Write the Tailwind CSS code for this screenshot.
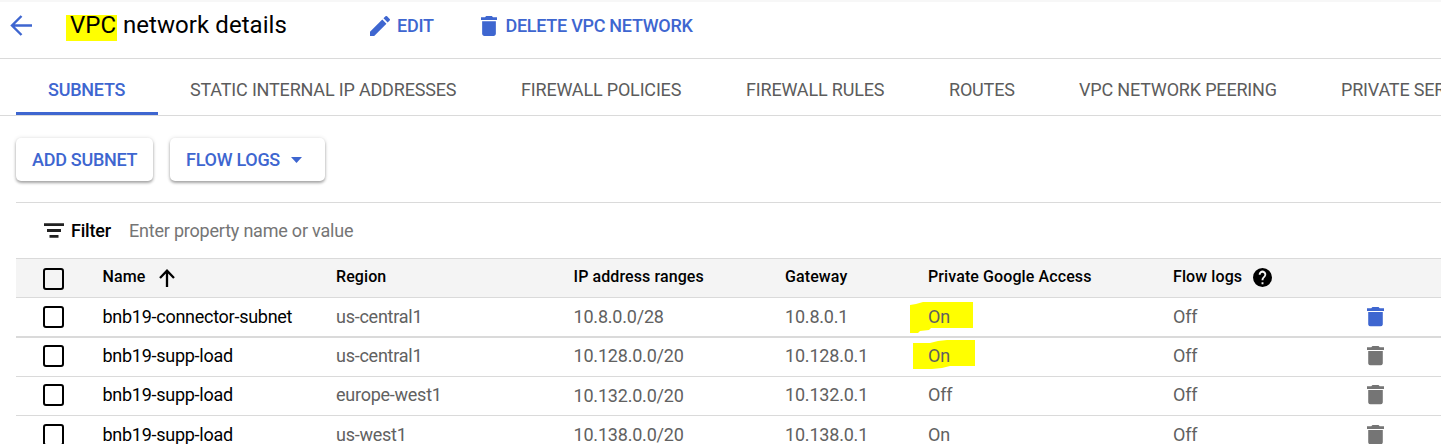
<!DOCTYPE html>
<html lang="en">
<head>
<meta charset="utf-8">
<title>VPC network details</title>
<script src="https://cdn.jsdelivr.net/npm/@tailwindcss/browser@4"></script>
</head>
<body class="bg-white font-['Roboto',sans-serif] text-black overflow-hidden w-[1441px] h-[444px]">
<svg class="hidden">
  <symbol id="trash" viewBox="5 3 14 18" preserveAspectRatio="none"><path d="M6 19c0 1.1.9 2 2 2h8c1.1 0 2-.9 2-2V7.700H6V19zM19 4.2h-3.5l-1-1.2h-5l-1 1.2H5v2.4h14V4.2z"/></symbol>
</svg>
<header class="h-[59px] border-b border-[#dadada] border-t-2 border-t-[#f7f7f7] flex items-center pb-[11px] whitespace-nowrap">
  <svg class="ml-[10px] w-[22px] h-[21px] mt-[2px] shrink-0" viewBox="0 0 22 21" fill="none" stroke="#3e66d0" stroke-width="2.4"><path d="M22 10.5H2M11.500 1L2 10.5L11.500 20"/></svg>
  <h1 class="ml-[34px] w-[304px] h-[26px] text-[24px] leading-[26px] flex font-normal"><span class="bg-[#ffff00] pl-1 w-[51px] h-[26px] mt-[3px] leading-[20px] shrink-0 tracking-[0.05px]">VPC</span><span class="ml-[6px] tracking-[0.06px]">network details</span></h1>
  <div class="w-[110px] flex items-center text-[18px] font-medium text-[#3e66d0] mt-[2px] tracking-[-0.27px]">
    <svg class="w-5 h-5 mr-[7px]" viewBox="3 3 18 18" fill="#3e66d0"><path d="M3 17.25V21h3.75L17.8 9.94l-3.75-3.75L3 17.25zM20.7 7.04a1 1 0 0 0 0-1.41l-2.34-2.34a1 1 0 0 0-1.41 0l-1.83 1.83 3.75 3.75 1.83-1.83z"/></svg><span>EDIT</span>
  </div>
  <div class="flex items-center text-[18px] font-medium text-[#3e66d0] mt-[2px] tracking-[-0.28px]">
    <svg class="w-4 h-5 ml-px mr-[8.5px]" fill="#3e66d0"><use href="#trash"/></svg><span>DELETE VPC NETWORK</span>
  </div>
</header>
<nav class="h-[57px] border-b border-[#dadada] flex text-[18px] text-[#5c5c5c] whitespace-nowrap leading-[62px] tracking-[-0.18px] overflow-hidden">
  <div class="ml-4 w-[142px] shrink-0 pl-8 text-[#3e66d0] font-medium border-b-3 border-[#3e66d0] h-[56px] mr-8 tracking-[-0.25px]"><span>SUBNETS</span></div>
  <div class="w-[331px] shrink-0"><span>STATIC INTERNAL IP ADDRESSES</span></div>
  <div class="w-[225px] shrink-0"><span>FIREWALL POLICIES</span></div>
  <div class="w-[203px] shrink-0"><span>FIREWALL RULES</span></div>
  <div class="w-[130px] shrink-0"><span>ROUTES</span></div>
  <div class="w-[262px] shrink-0"><span>VPC NETWORK PEERING</span></div>
  <div class="min-w-0 flex-1 overflow-hidden"><span>PRIVATE SERVICE</span></div>
</nav>
<div class="flex pt-[22px] pl-4 gap-[17px] h-[86px] text-[18px] font-medium text-[#3e66d0] leading-[43px] whitespace-nowrap tracking-[-0.28px]">
  <button class="w-[137px] h-[43px] rounded-[5px] text-left pl-4 shadow-[0_2px_3px_rgba(0,0,0,0.32),0_0_4px_rgba(0,0,0,0.12)]"><span>ADD SUBNET</span></button>
  <button class="w-[155px] h-[43px] rounded-[5px] pl-4 flex items-center shadow-[0_2px_3px_rgba(0,0,0,0.32),0_0_4px_rgba(0,0,0,0.12)]"><span class="w-[105px] text-left">FLOW LOGS</span><svg class="w-[11px] h-[6px]" viewBox="0 0 11 6" fill="#3e66d0"><path d="M0 0H11L5.5 6z"/></svg></button>
</div>
<main class="ml-4 border-t border-[#dadada]">
  <div class="h-[56px] border-b border-[#dadada] flex items-center text-[18px] pl-7 tracking-[-0.21px]">
    <svg class="w-5 h-[15px] mr-[7px]" viewBox="0 0 20 15" fill="#212121"><path d="M0 0.300h20v2.8H0zM3 6h14v2.9H3zM5.500 12h9v2.700h-9z"/></svg>
    <span class="font-medium w-[58px]">Filter</span><span class="text-[#757575]">Enter property name or value</span>
  </div>
  <div id="rows" class="whitespace-nowrap"></div>
</main>
<script>
const box = '<i class="block ml-[27px] w-[21px] h-[22px] border-2 border-black rounded-[3px]"></i>';
const grid = 'grid grid-cols-[86.5px_233.5px_237.5px_211.5px_143px_245px_193px_76px] items-center border-[#dadada] ';
const marks = [
  '<svg class="absolute -left-[18px] -top-[4px] w-[63px] h-[31px]" fill="#ff0"><path d="M0 3L6 2L13 0H63V26H21L19 28L10 29L8 31H0z"/></svg>',
  '<svg class="absolute -left-[15px] -top-[5.500px] w-[62px] h-[29px]" fill="#ff0"><path d="M0 3H17L25 1L34 0H62V26H37L29 28L19 29H0z"/></svg>', '', ''];
const data = [
  ['bnb19-connector-subnet','us-central1','10.8.0.0/28','10.8.0.1','On','Off'],
  ['bnb19-supp-load','us-central1','10.128.0.0/20','10.128.0.1','On','Off'],
  ['bnb19-supp-load','europe-west1','10.132.0.0/20','10.132.0.1','Off','Off'],
  ['bnb19-supp-load','us-west1','10.138.0.0/20','10.138.0.1','On','Off']];
const heights = ['h-[40px] border-b-2', 'h-[39px] border-b pb-[2px]', 'h-[39px] border-b pb-[2px]', 'h-[39px] border-b'];
const spacing = ['tracking-[-0.25px]', 'tracking-[-0.2px]', 'tracking-[-0.2px]', 'tracking-[-0.2px]', 'tracking-[-0.2px]'];
let html = '<div class="' + grid + 'h-[39px] border-b bg-[#f4f4f4] text-[16px] font-medium tracking-[0.1px]">' +
  '<div class="pt-[2px]">' + box + '</div>' +
  '<div class="flex items-center"><span class="w-[56.5px] -mt-[2px]">Name</span><svg class="w-4 h-[18px]" viewBox="0 0 16 18" fill="none" stroke="#000" stroke-width="2.3"><path d="M8 18V2M1 9L8 1.700L15 9"/></svg></div>' +
  '<div class="pb-[2px]"><span>Region</span></div><div class="pb-[2px]"><span>IP address ranges</span></div><div class="pb-[2px]"><span>Gateway</span></div><div class="pb-[2px]"><span>Private Google Access</span></div>' +
  '<div class="flex items-center pb-[2px]"><span class="w-[80px]">Flow logs</span><svg class="w-[19px] h-[19px]" viewBox="2 2 20 20"><path d="M12 2a10 10 0 1 0 0 20 10 10 0 0 0 0-20zm1 17h-2v-2h2v2zm2.070-7.750-.9.920C13.450 12.900 13 13.500 13 15h-2v-.5c0-1.100.45-2.100 1.170-2.830l1.240-1.260A2 2 0 1 0 10 9H8a4 4 0 1 1 7.070 2.250z"/></svg></div><div></div></div>';
data.forEach((r, i) => {
  html += '<div class="' + grid + heights[i] + ' text-[18px] leading-[22px] text-[#616161]"><div>' + box + '</div><div class="text-black tracking-[-0.27px]"><span>' + r[0] + '</span></div>' +
    r.slice(1).map((t, k) => '<div class="relative ' + spacing[k] + (i === 2 && k === 1 ? ' pt-[2px]' : '') + '">' + (k === 3 ? marks[i] : '') + '<span class="relative">' + t + '</span></div>').join('') +
    '<div><svg class="ml-px w-[17px] h-[19.5px] ' + (i ? 'fill-[#757575]' : 'fill-[#3e66d0]') + '"><use href="#trash"/></svg></div></div>';
});
document.getElementById('rows').innerHTML = html;
</script>
</body>
</html>
